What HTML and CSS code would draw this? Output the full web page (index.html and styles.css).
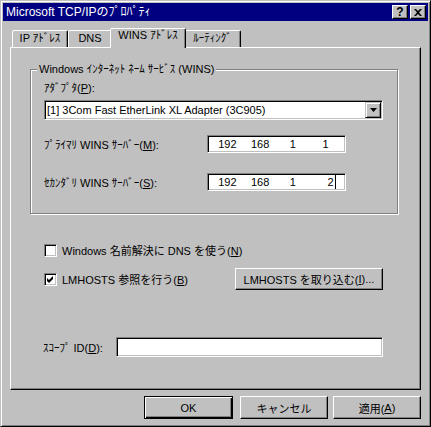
FILE: index.html
```html
<!DOCTYPE html>
<html lang="ja">
<head>
  <meta charset="UTF-8">
  <title>Microsoft TCP/IPのプロパティ</title>
  <link rel="stylesheet" href="styles.css">
</head>
<body>

  <div class="window">
    <div class="titlebar">
      <span class="title">Microsoft TCP/IPのﾌﾟﾛﾊﾟﾃｨ</span>
      <div class="title-btns">
        <span class="tbtn help">?</span>
        <span class="tbtn">
          <svg width="8" height="7" viewBox="0 0 8 7"><path d="M0 0h2l2 2 2-2h2L5 3.5 8 7H6L4 5 2 7H0l3-3.5z" fill="#000"/></svg>
        </span>
      </div>
    </div>

    <div class="tabs">
      <div class="tab tab-ip">IP ｱﾄﾞﾚｽ</div>
      <div class="tab tab-dns">DNS</div>
      <div class="tab tab-wins active">WINS ｱﾄﾞﾚｽ</div>
      <div class="tab tab-route">ﾙｰﾃｨﾝｸﾞ</div>
    </div>

    <div class="panel">
      <div class="group">
        <div class="legend">Windows ｲﾝﾀｰﾈｯﾄ ﾈｰﾑ ｻｰﾋﾞｽ (WINS)</div>
        <div class="label">ｱﾀﾞﾌﾟﾀ(<u>P</u>):</div>
        <div class="combo">
          <span class="combo-text">[1] 3Com Fast EtherLink XL Adapter (3C905)</span>
          <span class="combo-btn">
            <svg width="7" height="4" viewBox="0 0 7 4"><path d="M0 0h7L3.5 4z" fill="#000"/></svg>
          </span>
        </div>
        <div class="row row-first">
          <span class="row-label">ﾌﾟﾗｲﾏﾘ WINS ｻｰﾊﾞｰ(<u>M</u>):</span>
          <div class="ipfield"><span>192</span><span>168</span><span>1</span><span>1</span></div>
        </div>
        <div class="row row-second">
          <span class="row-label">ｾｶﾝﾀﾞﾘ WINS ｻｰﾊﾞｰ(<u>S</u>):</span>
          <div class="ipfield"><span>192</span><span>168</span><span>1</span><span class="caret">2</span></div>
        </div>
      </div>

      <div class="check-row first">
        <span class="checkbox"></span>
        <span>Windows 名前解決に DNS を使う(<u>N</u>)</span>
      </div>
      <div class="check-row second">
        <span class="checkbox">
          <svg width="7" height="7" viewBox="0 0 7 7"><path d="M0 2l2 2 4-4v3L2 7 0 5z" fill="#000"/></svg>
        </span>
        <span>LMHOSTS 参照を行う(<u>B</u>)</span>
        <span class="btn btn-lmhosts">LMHOSTS を取り込む(<u>I</u>)...</span>
      </div>

      <div class="scope-row">
        <span class="scope-label">ｽｺｰﾌﾟ ID(<u>D</u>):</span>
        <div class="textbox"></div>
      </div>
    </div>

    <div class="footer">
      <span class="btn btn-default">OK</span>
      <span class="btn btn-cancel">キャンセル</span>
      <span class="btn">適用(<u>A</u>)</span>
    </div>
  </div>

</body>
</html>
```

FILE: styles.css
```css
* {
  box-sizing: border-box;
}
body {
  margin: 0;
  background: #c0c0c0;
  font: 11px "Liberation Sans", "Noto Sans CJK JP", sans-serif;
  color: #000;
}
u {
  text-decoration: underline;
  text-underline-offset: 1px;
}

.window {
  width: 431px;
  height: 427px;
  background: #c0c0c0;
  border: 1px solid;
  border-color: #c0c0c0 #000 #000 #c0c0c0;
  box-shadow: inset 1px 1px #fff, inset -1px -1px #808080;
  padding: 2px;
}

/* title bar */
.titlebar {
  height: 18px;
  background: #000080;
  color: #fff;
  display: flex;
  align-items: center;
  justify-content: space-between;
  padding: 0 2px 0 3px;
}
.title {
  font-size: 12px;
  line-height: 14px;
}
.title-btns {
  display: flex;
  gap: 2px;
}
.tbtn {
  width: 16px;
  height: 14px;
  background: #c0c0c0;
  border: 1px solid;
  border-color: #fff #000 #000 #fff;
  box-shadow: inset -1px -1px #808080;
  display: flex;
  align-items: center;
  justify-content: center;
  color: #000;
}
.tbtn.help {
  font-weight: bold;
  font-size: 12px;
  line-height: 12px;
}

/* tabs */
.tabs {
  height: 26px;
  display: flex;
  align-items: flex-end;
  padding-left: 9px;
}
.tab {
  height: 17px;
  border: 1px solid;
  border-bottom: none;
  border-color: #fff #000 transparent #fff;
  border-radius: 2px 2px 0 0;
  box-shadow: inset -1px 0 #808080;
  background: #c0c0c0;
  text-align: center;
  line-height: 15px;
}
.tab-ip { width: 56px; }
.tab-dns { width: 44px; }
.tab-wins { width: 72px; }
.tab-route { width: 57px; }
.tab.active {
  height: 20px;
  width: 76px;
  margin: 0 -2px -1px;
  line-height: 13px;
  position: relative;
  z-index: 1;
}

/* tab page */
.panel {
  margin-left: 7px;
  width: 411px;
  height: 343px;
  border: 1px solid;
  border-color: #fff #000 #000 #fff;
  box-shadow: inset -1px -1px #808080;
  padding-top: 21px;
}

.group {
  margin-left: 19px;
  width: 368px;
  height: 145px;
  border: 1px solid #808080;
  box-shadow: inset 1px 1px #fff, 1px 1px #fff;
  padding-left: 13px;
}
.legend {
  width: fit-content;
  margin: -7px 0 0 -7px;
  padding: 0 2px;
  line-height: 12px;
  background: #c0c0c0;
}
.label {
  margin-top: 7px;
  line-height: 12px;
}

.combo, .ipfield, .textbox, .checkbox {
  background: #fff;
  border: 1px solid;
  border-color: #808080 #fff #fff #808080;
  box-shadow: inset 1px 1px #000, inset -1px -1px #c0c0c0;
}
.combo {
  margin-top: 6px;
  width: 339px;
  height: 20px;
  padding: 1px;
  display: flex;
  align-items: center;
}
.combo-text {
  flex: 1;
  padding-left: 1px;
  line-height: 16px;
}
.combo-btn {
  width: 16px;
  height: 16px;
  background: #c0c0c0;
  border: 1px solid;
  border-color: #c0c0c0 #000 #000 #c0c0c0;
  box-shadow: inset 1px 1px #fff, inset -1px -1px #808080;
  display: flex;
  align-items: center;
  justify-content: center;
}

.row {
  display: flex;
  align-items: center;
  height: 18px;
}
.row-first { margin-top: 15px; }
.row-second { margin-top: 20px; }
.row-label {
  width: 163px;
}
.ipfield {
  width: 139px;
  height: 18px;
  padding: 0 3px;
  display: grid;
  grid-template-columns: repeat(4, 1fr);
  align-items: center;
  text-align: center;
  line-height: 14px;
}
.caret {
  border-right: 1px solid #000;
  margin-left: 12px;
  justify-self: center;
  padding-right: 1px;
}

/* check boxes */
.check-row {
  display: flex;
  align-items: center;
  gap: 5px;
  margin-left: 33px;
  width: 339px;
}
.check-row.first {
  margin-top: 26px;
  height: 20px;
}
.check-row.second {
  margin-top: 8px;
  height: 22px;
}
.checkbox {
  width: 13px;
  height: 13px;
  display: flex;
  align-items: center;
  justify-content: center;
}

/* buttons */
.btn {
  height: 23px;
  width: 88px;
  border: 1px solid;
  border-color: #fff #000 #000 #fff;
  box-shadow: inset -1px -1px #808080;
  display: flex;
  align-items: center;
  justify-content: center;
  background: #c0c0c0;
}
.btn-lmhosts {
  margin-left: auto;
  width: 148px;
  height: 22px;
}
.btn-default {
  border-color: #000;
  box-shadow: inset 1px 1px #fff, inset -1px -1px #000, inset -2px -2px #808080;
  width: 89px;
}

.scope-row {
  display: flex;
  align-items: center;
  height: 20px;
  margin: 47px 0 0 32px;
}
.scope-label {
  width: 73px;
}
.textbox {
  width: 267px;
  height: 20px;
}

.footer {
  display: flex;
  justify-content: flex-end;
  margin-top: 6px;
  padding-right: 7px;
}
.footer .btn-cancel {
  margin: 0 5px 0 7px;
}
```
